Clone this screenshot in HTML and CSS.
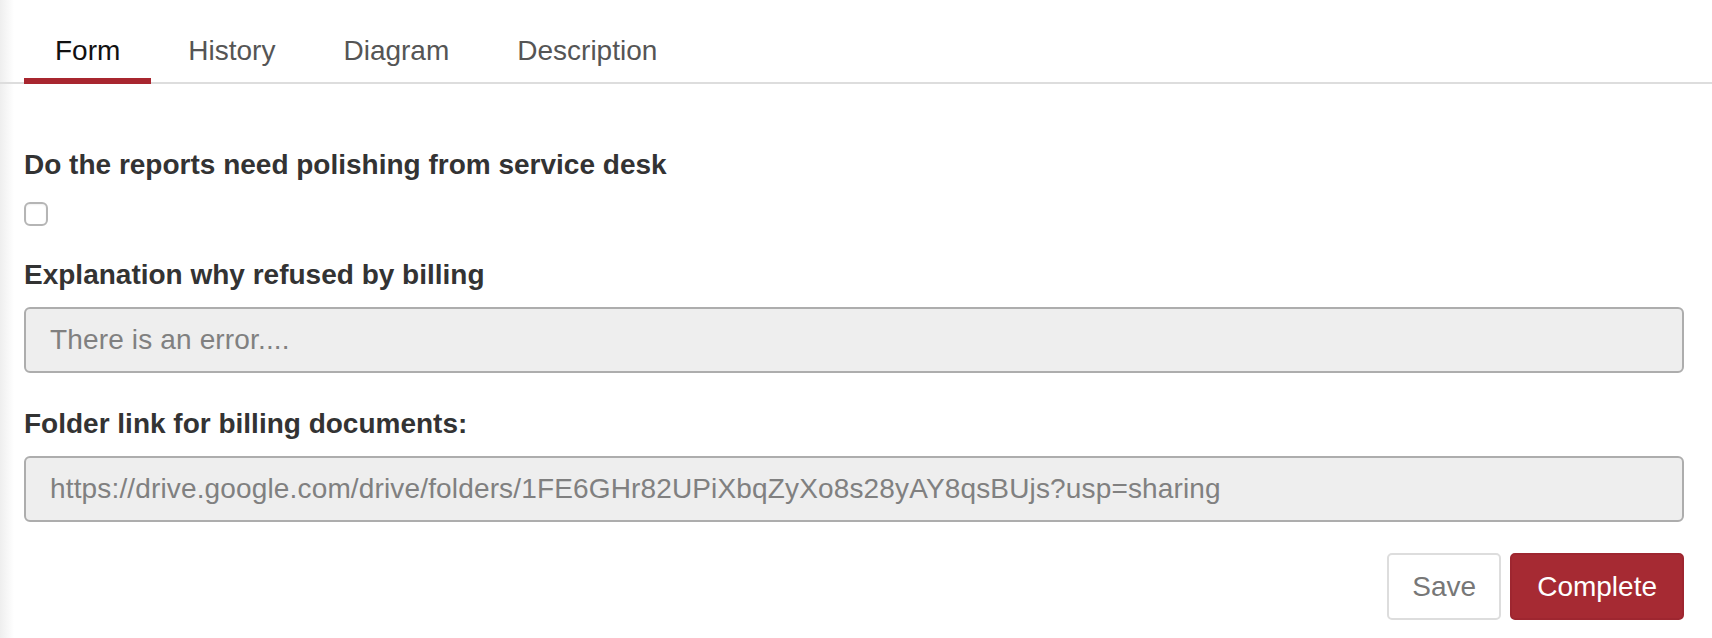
FILE: index.html
```html
<!DOCTYPE html>
<html lang="en">
<head>
<meta charset="utf-8">
<title>Task form</title>
<link rel="stylesheet" href="styles.css">
</head>
<body>
  <nav class="tabs">
    <a class="tab active" href="#">Form</a>
    <a class="tab" href="#">History</a>
    <a class="tab" href="#">Diagram</a>
    <a class="tab" href="#">Description</a>
  </nav>
  <form class="form">
    <div class="field field-check">
      <label class="label" for="polish">Do the reports need polishing from service desk</label>
      <input class="checkbox" type="checkbox" id="polish">
    </div>
    <div class="field">
      <label class="label" for="explain">Explanation why refused by billing</label>
      <input class="input" id="explain" type="text" value="There is an error...." readonly>
    </div>
    <div class="field">
      <label class="label" for="folder">Folder link for billing documents:</label>
      <input class="input" id="folder" type="text" value="https://drive.google.com/drive/folders/1FE6GHr82UPiXbqZyXo8s28yAY8qsBUjs?usp=sharing" readonly>
    </div>
    <div class="actions">
      <button class="btn btn-save" type="button">Save</button>
      <button class="btn btn-complete" type="button">Complete</button>
    </div>
  </form>
</body>
</html>
```
FILE: styles.css
```css
* { box-sizing: border-box; }

body {
  margin: 0;
  font-family: "Liberation Sans", Arial, Helvetica, sans-serif;
  background: linear-gradient(to right, #eeeeee 0, #ffffff 14px);
  color: #333;
}

.tabs {
  display: flex;
  gap: 6px;
  padding: 31px 24px 0;
  border-bottom: 2px solid #dddddd;
}

.tab {
  font-size: 28px;
  line-height: 40px;
  padding: 0 31px 7px;
  border-bottom: 6px solid transparent;
  margin-bottom: -2px;
  color: #555555;
  text-decoration: none;
}

.tab.active {
  color: #111111;
  border-bottom-color: #a8262f;
}

.form {
  padding: 61px 28px 0 24px;
}

.field {
  margin-bottom: 31px;
}

.field-check {
  margin-bottom: 29px;
}

.label {
  display: block;
  font-weight: bold;
  font-size: 28px;
  line-height: 40px;
  color: #333333;
  margin-bottom: 12px;
}

.field-check .label {
  margin-bottom: 17px;
}

.checkbox {
  appearance: none;
  -webkit-appearance: none;
  display: block;
  width: 24px;
  height: 24px;
  margin: 0;
  border: 2px solid #b5b5b5;
  border-radius: 6px;
  background: #ffffff;
  box-shadow: inset 0 1px 2px rgba(0, 0, 0, 0.06);
}

.input {
  display: block;
  width: 100%;
  height: 66px;
  padding: 0 24px;
  border: 2px solid #adadad;
  border-radius: 6px;
  background: #eeeeee;
  font-family: "Liberation Sans", Arial, Helvetica, sans-serif;
  font-size: 28px;
  letter-spacing: 0.15px;
  color: #808080;
  outline: none;
}

.actions {
  display: flex;
  justify-content: flex-end;
  gap: 9px;
}

.btn {
  height: 67px;
  font-family: "Liberation Sans", Arial, Helvetica, sans-serif;
  font-size: 28px;
  border-radius: 5px;
  border: 2px solid;
  cursor: pointer;
}

.btn-save {
  padding: 0 23px;
  background: #ffffff;
  border-color: #dddddd;
  color: #777777;
}

.btn-complete {
  padding: 0 25px;
  background: #a62a33;
  border-color: #9e2630;
  color: #ffffff;
}
```
